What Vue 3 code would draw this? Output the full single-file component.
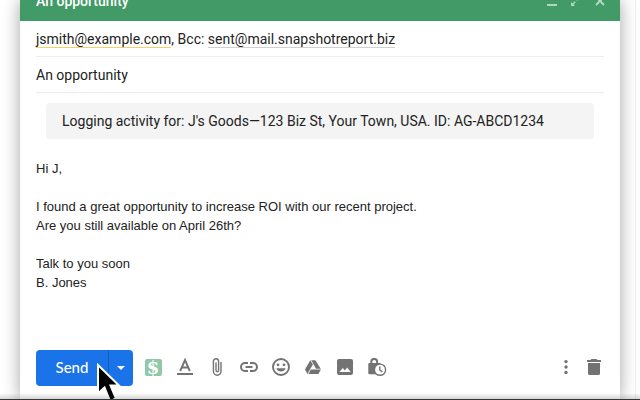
<script setup>
import { ref } from 'vue'

const subject = ref('An opportunity')
const message = ref(`Hi J,

I found a great opportunity to increase ROI with our recent project.
Are you still available on April 26th?

Talk to you soon
B. Jones`)
</script>

<template>
  <div class="page">
    <main class="compose">
      <header class="titlebar">
        <h1 class="title">{{ subject }}</h1>
        <button class="win" type="button" aria-label="Minimize">
          <svg viewBox="0 0 12 12"><path d="M1 9h10v2H1z" fill="currentColor" /></svg>
        </button>
        <button class="win" type="button" aria-label="Full screen">
          <svg viewBox="0 0 12 12">
            <path d="M7 1h4v4L9.500 3.500 7.200 5.800 6.200 4.800 8.500 2.500zM1 11V7l1.500 1.500 2.300-2.300 1 1L3.500 9.500 5 11z" fill="currentColor" />
          </svg>
        </button>
        <button class="win" type="button" aria-label="Close">
          <svg viewBox="0 0 12 12"><path d="M2 2l8 8M10 2l-8 8" fill="none" stroke="currentColor" stroke-width="2" /></svg>
        </button>
      </header>

      <div class="fields">
        <div class="row">
          <a class="address external" href="#">jsmith@example.com</a>, Bcc:
          <a class="address" href="#">sent@mail.snapshotreport.biz</a>
        </div>
        <input v-model="subject" class="row subject" type="text" aria-label="Subject" />
        <p class="notice">Logging activity for: J's Goods—123 Biz St, Your Town, USA. ID: AG-ABCD1234</p>
        <textarea v-model="message" class="message" aria-label="Message body"></textarea>
      </div>

      <footer class="toolbar">
        <div class="send-group">
          <button class="send" type="button">Send</button>
          <button class="send-more" type="button" aria-label="More send options"><i class="caret"></i></button>
        </div>
        <button class="tool" type="button" aria-label="Log activity"><span class="badge">$</span></button>
        <button class="tool" type="button" aria-label="Formatting options">
          <svg viewBox="0 0 20 20">
            <path d="M2 15h16v2H2z" fill="currentColor" />
            <path d="M5.200 13L10 2l4.800 11M6.800 9.500h6.400" fill="none" stroke="currentColor" stroke-width="1.900" />
          </svg>
        </button>
        <button class="tool" type="button" aria-label="Attach files">
          <svg viewBox="0 0 20 20">
            <path d="M14 4v9.300a3.800 3.900 0 0 1-7.600 0V3.500a2.600 2.700 0 0 1 5.200 0v8.800a1.300 1.400 0 0 1-2.600 0V4.500" fill="none" stroke="currentColor" stroke-width="1.400" />
          </svg>
        </button>
        <button class="tool" type="button" aria-label="Insert link">
          <svg viewBox="0 0 20 20">
            <path d="M9 5H6a4 4 0 0 0 0 8h3M11 5h3a4 4 0 0 1 0 8h-3M6.500 9h7" fill="none" stroke="currentColor" stroke-width="2" />
          </svg>
        </button>
        <button class="tool" type="button" aria-label="Insert emoji">
          <svg viewBox="0 0 20 20">
            <circle cx="10" cy="9" r="8" fill="none" stroke="currentColor" stroke-width="1.900" />
            <circle cx="7" cy="6.800" r="1.400" fill="currentColor" />
            <circle cx="13" cy="6.800" r="1.400" fill="currentColor" />
            <path d="M5.300 10.300h9.400a5 5 0 0 1-9.400 0z" fill="currentColor" />
          </svg>
        </button>
        <button class="tool" type="button" aria-label="Insert files using Drive">
          <svg viewBox="0 0 20 20">
            <path d="M7.300 2.200L2 11.500l2.400 4.500L9.900 6.600zM8.200 2.200h4.200l5.300 8.600h-4.700zM7.900 11.600h10l-2.500 4.400H5.400z" fill="currentColor" />
          </svg>
        </button>
        <button class="tool" type="button" aria-label="Insert photo">
          <svg viewBox="0 0 20 20">
            <path d="M4 1h12a2 2 0 0 1 2 2v12a2 2 0 0 1-2 2H4a2 2 0 0 1-2-2V3a2 2 0 0 1 2-2zM4.300 14h11.400l-3.500-4.600-2.400 3L7.900 10z" fill="currentColor" fill-rule="evenodd" />
          </svg>
        </button>
        <button class="tool" type="button" aria-label="Confidential mode">
          <svg viewBox="0 0 20 20">
            <path d="M2.300 5h11.200v11.300H2.300a1 1 0 0 1-1-1V6a1 1 0 0 1 1-1z" fill="currentColor" />
            <path d="M4.300 6V3.600a2.900 2.700 0 0 1 5.800 0V6" fill="none" stroke="currentColor" stroke-width="2" />
            <circle cx="13" cy="11.700" r="6.300" fill="currentColor" />
            <circle cx="13" cy="11.700" r="4.900" fill="#fff" />
            <path d="M12.800 8.500v3.500l2.600 1.900" fill="none" stroke="currentColor" stroke-width="1.400" />
          </svg>
        </button>
        <span class="spacer"></span>
        <button class="tool narrow" type="button" aria-label="More options">
          <svg viewBox="0 0 20 20" fill="currentColor">
            <circle cx="10" cy="3.600" r="1.700" /><circle cx="10" cy="9" r="1.700" /><circle cx="10" cy="14.500" r="1.700" />
          </svg>
        </button>
        <button class="tool narrow" type="button" aria-label="Discard draft">
          <svg viewBox="0 0 20 20">
            <path d="M3 2h3.500l1-1h5l1 1H17v2H3zM4 5h12v10.500a1.500 1.500 0 0 1-1.500 1.500h-9A1.500 1.500 0 0 1 4 15.500z" fill="currentColor" />
          </svg>
        </button>
        <svg class="pointer" viewBox="0 0 26 42" aria-hidden="true">
          <path d="M2 2v28.500l6.500-6 5.500 13.500 6-2.500L14.500 22.500H23z" fill="#000" stroke="#fff" stroke-width="2" />
        </svg>
      </footer>
    </main>
  </div>
</template>

<style>
body {
  margin: 0;
  background: #fff;
}
</style>

<style scoped>
.page {
  position: relative;
  box-sizing: border-box;
  display: flex;
  min-height: 100vh;
  padding: 0 20px;
  overflow: hidden;
  border-bottom: 1px solid #353638;
  background: linear-gradient(#eee, #eee) right 4px top / 1px 100% no-repeat #fff;
  color: #222;
  font-family: Roboto, "Liberation Sans", sans-serif;
  font-size: 14px;
}
.page::after {
  content: "";
  position: absolute;
  inset: auto 0 0;
  height: 6px;
  background: linear-gradient(transparent, rgba(0, 0, 0, 0.16));
  pointer-events: none;
}
.compose {
  flex: 1;
  min-width: 0;
  display: flex;
  flex-direction: column;
  background: #fff;
  box-shadow: 0 0 16px rgba(0, 0, 0, 0.36);
}
button {
  padding: 0;
  border: 0;
  background: none;
  color: inherit;
  font: inherit;
  cursor: pointer;
}
.titlebar {
  box-sizing: border-box;
  display: flex;
  align-items: flex-end;
  height: 21px;
  padding: 0 8px 10px 16px;
  background: #429b66;
  color: #fff;
}
.title {
  flex: 1;
  margin: 0;
  font-size: 14px;
  font-weight: 500;
  line-height: 20px;
}
.win {
  display: grid;
  place-items: center;
  width: 24px;
  height: 20px;
  color: #b0d7c0;
}
.win svg {
  width: 12px;
  height: 12px;
}
.fields {
  flex: 1;
  display: flex;
  flex-direction: column;
  padding: 0 16px;
}
.row {
  box-sizing: border-box;
  height: 36px;
  border: 0;
  border-bottom: 1px solid #eceeef;
  line-height: 36px;
  white-space: nowrap;
}
.address {
  border-bottom: 1px solid #d0d0d0;
  color: inherit;
  text-decoration: none;
}
.external {
  border-color: #f9cf60;
}
.subject {
  width: 100%;
  padding: 0;
  background: none;
  color: inherit;
  font-family: inherit;
  font-size: 14px;
  outline: 0;
}
.notice {
  margin: 10px 10px 0;
  padding: 0 16px;
  border-radius: 4px;
  background: #f4f4f4;
  line-height: 36px;
}
.message {
  flex: 1;
  box-sizing: border-box;
  min-height: 200px;
  padding: 20px 0 0;
  border: 0;
  background: none;
  color: inherit;
  font: 13px/19px "Liberation Sans", Arial, sans-serif;
  outline: 0;
  resize: none;
}
.toolbar {
  position: relative;
  display: flex;
  align-items: center;
  padding: 0 12px 13px 16px;
}
.send-group {
  display: flex;
  height: 36px;
  margin-right: 4px;
  overflow: hidden;
  border-radius: 4px;
  background: #1a73e8;
  color: #fff;
}
.send {
  width: 72px;
  padding-bottom: 2px;
  font-family: Lato, sans-serif;
  font-size: 15px;
  font-weight: 500;
}
.send-more {
  display: grid;
  place-items: center;
  width: 25px;
  border-left: 1px solid #175bb8;
}
.caret {
  border: 4px solid transparent;
  border-top-color: #fff;
  border-bottom: 0;
}
.tool {
  display: grid;
  place-items: center;
  width: 32px;
  height: 36px;
  color: #737373;
}
.tool svg {
  width: 20px;
  height: 20px;
}
.narrow {
  width: 28px;
}
.badge {
  width: 17px;
  height: 17px;
  margin-bottom: 2px;
  border-radius: 2px;
  background: #8fc9a9;
  color: #fff;
  font-family: "DejaVu Serif", serif;
  font-size: 18px;
  font-weight: 700;
  line-height: 17px;
  text-align: center;
}
.spacer {
  flex: 1;
}
.pointer {
  position: absolute;
  top: 13px;
  left: 76px;
  width: 26px;
  height: 42px;
}
</style>
